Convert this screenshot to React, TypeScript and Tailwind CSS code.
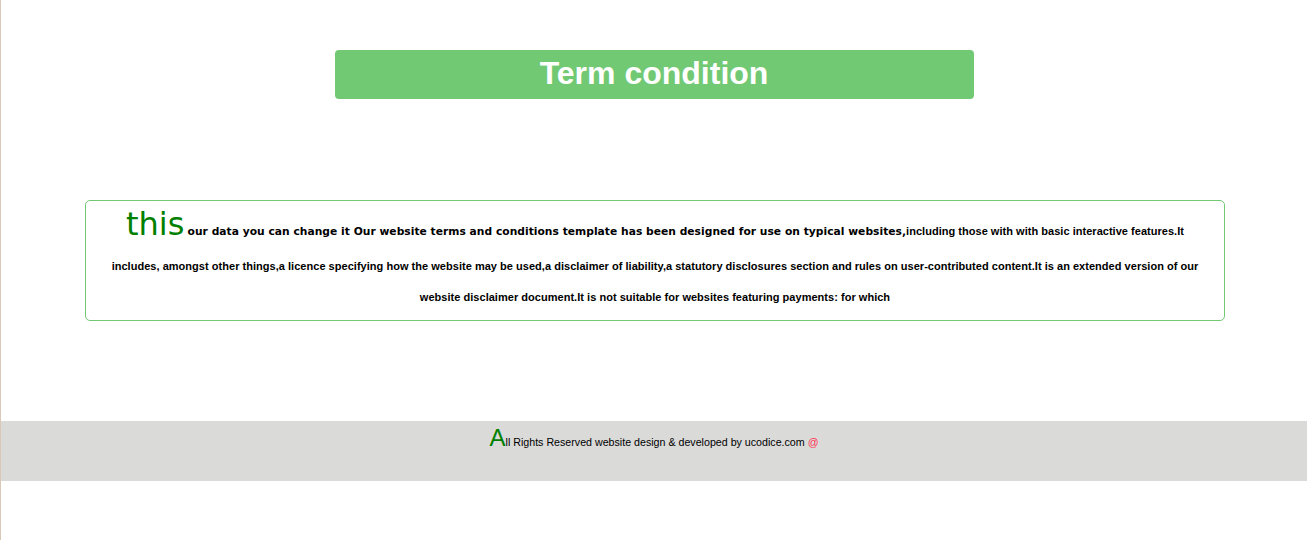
import React from 'react';

export default function App() {
  return (
    <div className="min-h-screen bg-white border-l border-[#d9c9b7] font-['Liberation_Sans',Arial,sans-serif]">
      {/* Title bar */}
      <div className="pt-[50px] flex justify-center">
        <div className="w-[639px] h-[49px] bg-[#72c974] rounded-[4px] flex items-center justify-center pb-[4px]">
          <h1 className="text-white text-[32px] font-bold leading-none">Term condition</h1>
        </div>
      </div>

      {/* Content box */}
      <div className="mt-[101px] ml-[84px] w-[1140px] h-[121px] border border-[#72c974] rounded-[5px] px-5">
        <p className="-mt-[3px] text-center text-[11px] font-bold leading-[31px] text-black tracking-[0.03px]">
          <span className="text-[32px] leading-[53px] font-normal text-[#008000] font-['DejaVu_Sans',Verdana,sans-serif]">this</span>{' '}
          <span className="text-[10.7px] font-['DejaVu_Sans',Verdana,sans-serif]">
            our data you can change it Our website terms and conditions template has been designed for use on typical websites,
          </span>
          including those with with basic interactive features.It includes, amongst other things,a licence specifying how the
          website may be used,a disclaimer of liability,a statutory disclosures section and rules on user-contributed
          content.It is an extended version of our website disclaimer document.It is not suitable for websites featuring
          payments: for which
        </p>
      </div>

      {/* Footer */}
      <footer className="mt-[100px] h-[60px] bg-[#dadad9] pt-[5px] text-center text-[10.667px] text-black">
        <span className="text-[24px] text-[#008000] leading-none">A</span>ll Rights Reserved website design &amp; developed
        by ucodice.com <span className="text-[#ff3355]">@</span>
      </footer>
    </div>
  );
}
